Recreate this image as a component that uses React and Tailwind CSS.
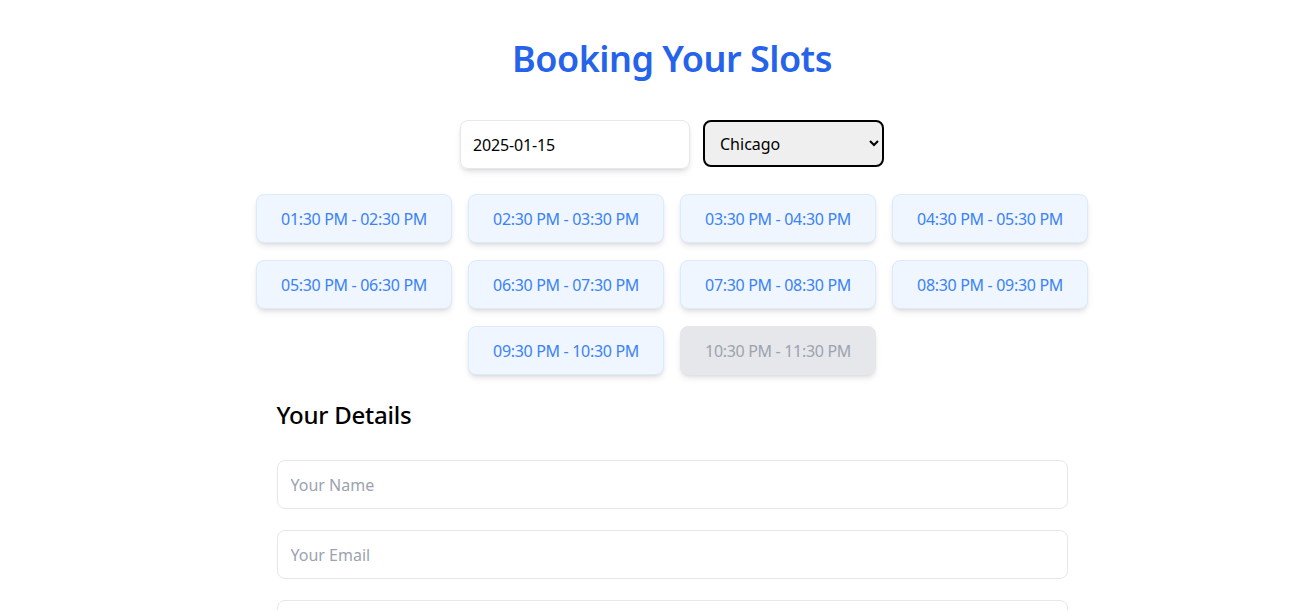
import React, { useState } from 'react';

const slots = [
  { label: "01:30 PM - 02:30 PM" },
  { label: "02:30 PM - 03:30 PM" },
  { label: "03:30 PM - 04:30 PM" },
  { label: "04:30 PM - 05:30 PM" },
  { label: "05:30 PM - 06:30 PM" },
  { label: "06:30 PM - 07:30 PM" },
  { label: "07:30 PM - 08:30 PM" },
  { label: "08:30 PM - 09:30 PM" },
  { label: "09:30 PM - 10:30 PM" },
  { label: "10:30 PM - 11:30 PM", booked: true },
];

const SlotButton = ({ slot }) => {
  const styles = slot.booked
    ? "bg-[#e5e7eb] text-[#9ca3af] border-[#e5e7eb] cursor-not-allowed"
    : "bg-[#eff6ff] text-[#3b82f6] border-[#dbeafe] hover:bg-[#dbeafe]";
  return (
    <button
      disabled={slot.booked}
      className={`w-[196px] h-[49px] rounded-lg border shadow-md text-base tracking-[-0.02em] ${styles}`}
    >
      {slot.label}
    </button>
  );
};

export default function App() {
  // --- States ---
  const [date, setDate] = useState("2025-01-15");
  const [city, setCity] = useState("Chicago");

  return (
    <div
      className="min-h-screen bg-white pl-[48px]"
      style={{ fontFamily: '"Noto Sans", sans-serif' }}
    >
      <div className="flex flex-col items-center pt-[39px]">
        {/* --- Header --- */}
        <h1 className="text-4xl font-semibold text-[#2563eb] leading-10 tracking-[-0.014em]">Booking Your Slots</h1>

        {/* --- Date & City --- */}
        <div className="flex items-start gap-[13px] mt-[41px]">
          <input
            type="text"
            value={date}
            onChange={(e) => setDate(e.target.value)}
            className="w-[230px] h-[49px] px-3 border border-[#e5e7eb] rounded-lg shadow-md text-base text-black tracking-[-0.01em] focus:outline-none"
          />
          <select
            value={city}
            onChange={(e) => setCity(e.target.value)}
            className="w-[181px] h-[47px] pl-[11px] pr-1 border-2 border-black rounded-lg bg-[#efefef] text-base text-black appearance-auto"
          >
            <option>Chicago</option>
            <option>New York</option>
            <option>Los Angeles</option>
          </select>
        </div>

        {/* --- Slots --- */}
        <div className="w-[832px] flex flex-wrap justify-center gap-x-[16px] gap-y-[17px] mt-[25px]">
          {slots.map((slot) => (
            <SlotButton key={slot.label} slot={slot} />
          ))}
        </div>

        {/* --- Details form --- */}
        <div className="w-[791px] mt-[24px]">
          <h2 className="text-2xl font-medium text-black leading-8 tracking-[-0.01em]">Your Details</h2>
          <div className="flex flex-col gap-[21px] mt-[29px] pb-10">
            <input
              type="text"
              placeholder="Your Name"
              className="w-full h-[49px] px-[13px] border border-[#e5e7eb] rounded-lg text-base placeholder-[#9ca3af] focus:outline-none"
            />
            <input
              type="email"
              placeholder="Your Email"
              className="w-full h-[49px] px-[13px] border border-[#e5e7eb] rounded-lg text-base placeholder-[#9ca3af] focus:outline-none"
            />
            <input
              type="tel"
              placeholder="Your Phone"
              className="w-full h-[49px] px-[13px] border border-[#e5e7eb] rounded-lg text-base placeholder-[#9ca3af] focus:outline-none"
            />
          </div>
        </div>
      </div>
    </div>
  );
}
